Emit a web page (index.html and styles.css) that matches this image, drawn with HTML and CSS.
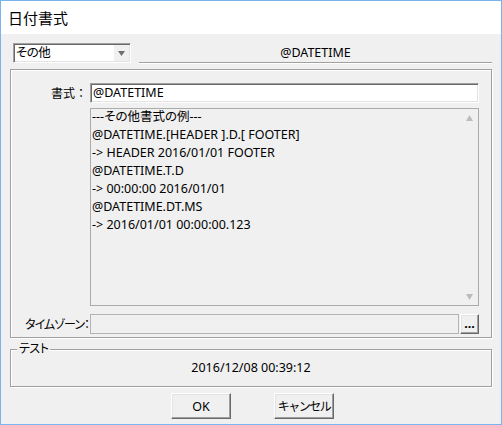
FILE: index.html
```html
<!DOCTYPE html>
<html lang="ja">
<head>
<meta charset="utf-8">
<title>日付書式</title>
<link rel="stylesheet" href="styles.css">
</head>
<body>
<div class="window">
  <div class="titlebar">日付書式</div>
  <div class="body">
    <div class="top-row">
      <div class="combo">
        <span class="combo-text">その他</span>
        <span class="combo-btn"><svg width="7" height="5" viewBox="0 0 7 5"><polygon points="0,0 7,0 3.5,5" fill="#6f6f6f"/></svg></span>
      </div>
      <div class="format-head">@DATETIME</div>
    </div>

    <div class="group main-group">
      <div class="lbl lbl-format">書式：</div>
      <div class="input">@DATETIME</div>
      <div class="examples">
        <div class="examples-text">
          <div>---その他書式の例---</div>
          <div>@DATETIME.[HEADER ].D.[ FOOTER]</div>
          <div>-&gt; HEADER 2016/01/01 FOOTER</div>
          <div>@DATETIME.T.D</div>
          <div>-&gt; 00:00:00 2016/01/01</div>
          <div>@DATETIME.DT.MS</div>
          <div>-&gt; 2016/01/01 00:00:00.123</div>
        </div>
        <div class="vscroll">
          <span class="arrow"><svg width="7" height="6" viewBox="0 0 7 6"><polygon points="3.5,0 7,6 0,6" fill="#bcbcbc"/></svg></span>
          <span class="arrow"><svg width="7" height="6" viewBox="0 0 7 6"><polygon points="0,0 7,0 3.5,6" fill="#bcbcbc"/></svg></span>
        </div>
      </div>
      <div class="lbl lbl-tz">タイムゾーン：</div>
      <div class="tz-row">
        <div class="tz-input"></div>
        <button class="btn browse">...</button>
      </div>
    </div>

    <div class="group test-group">
      <span class="legend">テスト</span>
      <div class="test-value">2016/12/08 00:39:12</div>
    </div>

    <div class="buttons">
      <button class="btn action">OK</button>
      <button class="btn action kana">キャンセル</button>
    </div>
  </div>
</div>
</body>
</html>
```

FILE: styles.css
```css
* { box-sizing: border-box; }

html, body {
  margin: 0;
  padding: 0;
  background: #f0f0f0;
}

body {
  font-family: "Noto Sans", "Noto Sans CJK JP", sans-serif;
  font-size: 12.5px;
  color: #000;
  font-feature-settings: "palt";
}

.window {
  width: 502px;
  height: 425px;
  border: 1px solid #7ab4ec;
  display: flex;
  flex-direction: column;
  background: #f0f0f0;
}

.titlebar {
  height: 33px;
  line-height: 33px;
  background: #fff;
  padding-left: 7px;
  font-family: "Noto Sans CJK JP", sans-serif;
  font-size: 15px;
  font-feature-settings: normal;
}

.body {
  flex: 1;
  padding: 9px 9px 0 9px;
  display: flex;
  flex-direction: column;
}

/* top row */
.top-row {
  display: flex;
  align-items: flex-start;
}

.combo {
  margin-left: 3px;
  width: 118px;
  height: 20px;
  display: flex;
  background: #fff;
  border: 1px solid;
  border-color: #a0a0a0 #fff #fff #a0a0a0;
  box-shadow: inset 1px 1px 0 #696969, inset -1px -1px 0 #e3e3e3;
}

.combo-text {
  flex: 1;
  padding-left: 2px;
  line-height: 18px;
  letter-spacing: -0.5px;
}

.combo-btn {
  width: 15px;
  margin: 1px 1px 1px 0;
  background: #f0f0f0;
  display: flex;
  align-items: center;
  justify-content: center;
}

.format-head {
  flex: 1;
  margin-left: 8px;
  height: 20px;
  line-height: 19px;
  text-align: center;
  border-bottom: 1px solid #a0a0a0;
  box-shadow: 0 1px 0 #fff;
}

/* group boxes */
.group {
  border: 1px solid #a0a0a0;
  box-shadow: inset 1px 1px 0 #fff, 1px 1px 0 #fff;
}

.main-group {
  margin-top: 6px;
  height: 269px;
  padding: 13px 12px 3px 0;
  display: grid;
  grid-template-columns: 79px 1fr;
  grid-template-rows: auto auto auto;
  align-content: start;
}

.lbl {
  justify-self: end;
  align-self: center;
  white-space: nowrap;
}

.lbl-format {
  grid-column: 1;
  grid-row: 1;
  padding-right: 3px;
  font-size: 12px;
  font-feature-settings: normal;
}

.lbl-tz {
  grid-column: 1;
  grid-row: 3;
  padding-right: 1px;
  font-size: 12px;
  letter-spacing: -1px;
}

.input {
  grid-column: 2;
  grid-row: 1;
  height: 20px;
  background: #fff;
  border: 1px solid;
  border-color: #a0a0a0 #fff #fff #a0a0a0;
  box-shadow: inset 1px 1px 0 #696969, inset -1px -1px 0 #e3e3e3;
  padding-left: 2px;
  line-height: 18px;
}

.examples {
  grid-column: 2;
  grid-row: 2;
  margin: 5px 0 8px;
  height: 198px;
  border: 1px solid #ababab;
  background: #f0f0f0;
  display: flex;
}

.examples-text {
  flex: 1;
  padding-left: 1px;
  line-height: 18px;
  margin-top: -1px;
}

.vscroll {
  width: 17px;
  display: flex;
  flex-direction: column;
  justify-content: space-between;
}

.arrow {
  height: 17px;
  display: flex;
  align-items: center;
  justify-content: center;
}

.tz-row {
  grid-column: 2;
  grid-row: 3;
  display: flex;
  gap: 1px;
  height: 20px;
}

.tz-input {
  flex: 1;
  border: 1px solid #b4b4b4;
  background: #f0f0f0;
}

/* buttons */
.btn {
  font-family: inherit;
  font-size: 12.5px;
  color: #000;
  background: #f0f0f0;
  border: 1px solid;
  border-color: #fff #696969 #696969 #fff;
  box-shadow: inset -1px -1px 0 #a0a0a0, inset 1px 1px 0 #e3e3e3;
  padding: 0;
  margin: 0;
  border-radius: 0;
  white-space: nowrap;
}

.browse {
  width: 19px;
  height: 20px;
  font-weight: bold;
  line-height: 14px;
}

/* test group */
.test-group {
  position: relative;
  margin-top: 11px;
  height: 38px;
}

.legend {
  position: absolute;
  top: -9px;
  left: 6px;
  padding: 0 2px;
  line-height: 16px;
  background: #f0f0f0;
  font-size: 12px;
  letter-spacing: -0.5px;
}

.test-value {
  line-height: 36px;
  text-align: center;
}

.buttons {
  margin-top: 6px;
  display: flex;
  justify-content: center;
  gap: 43px;
  padding-left: 3px;
}

.action {
  width: 60px;
  height: 26px;
}

.kana {
  font-size: 12px;
  letter-spacing: -1.5px;
}
```
